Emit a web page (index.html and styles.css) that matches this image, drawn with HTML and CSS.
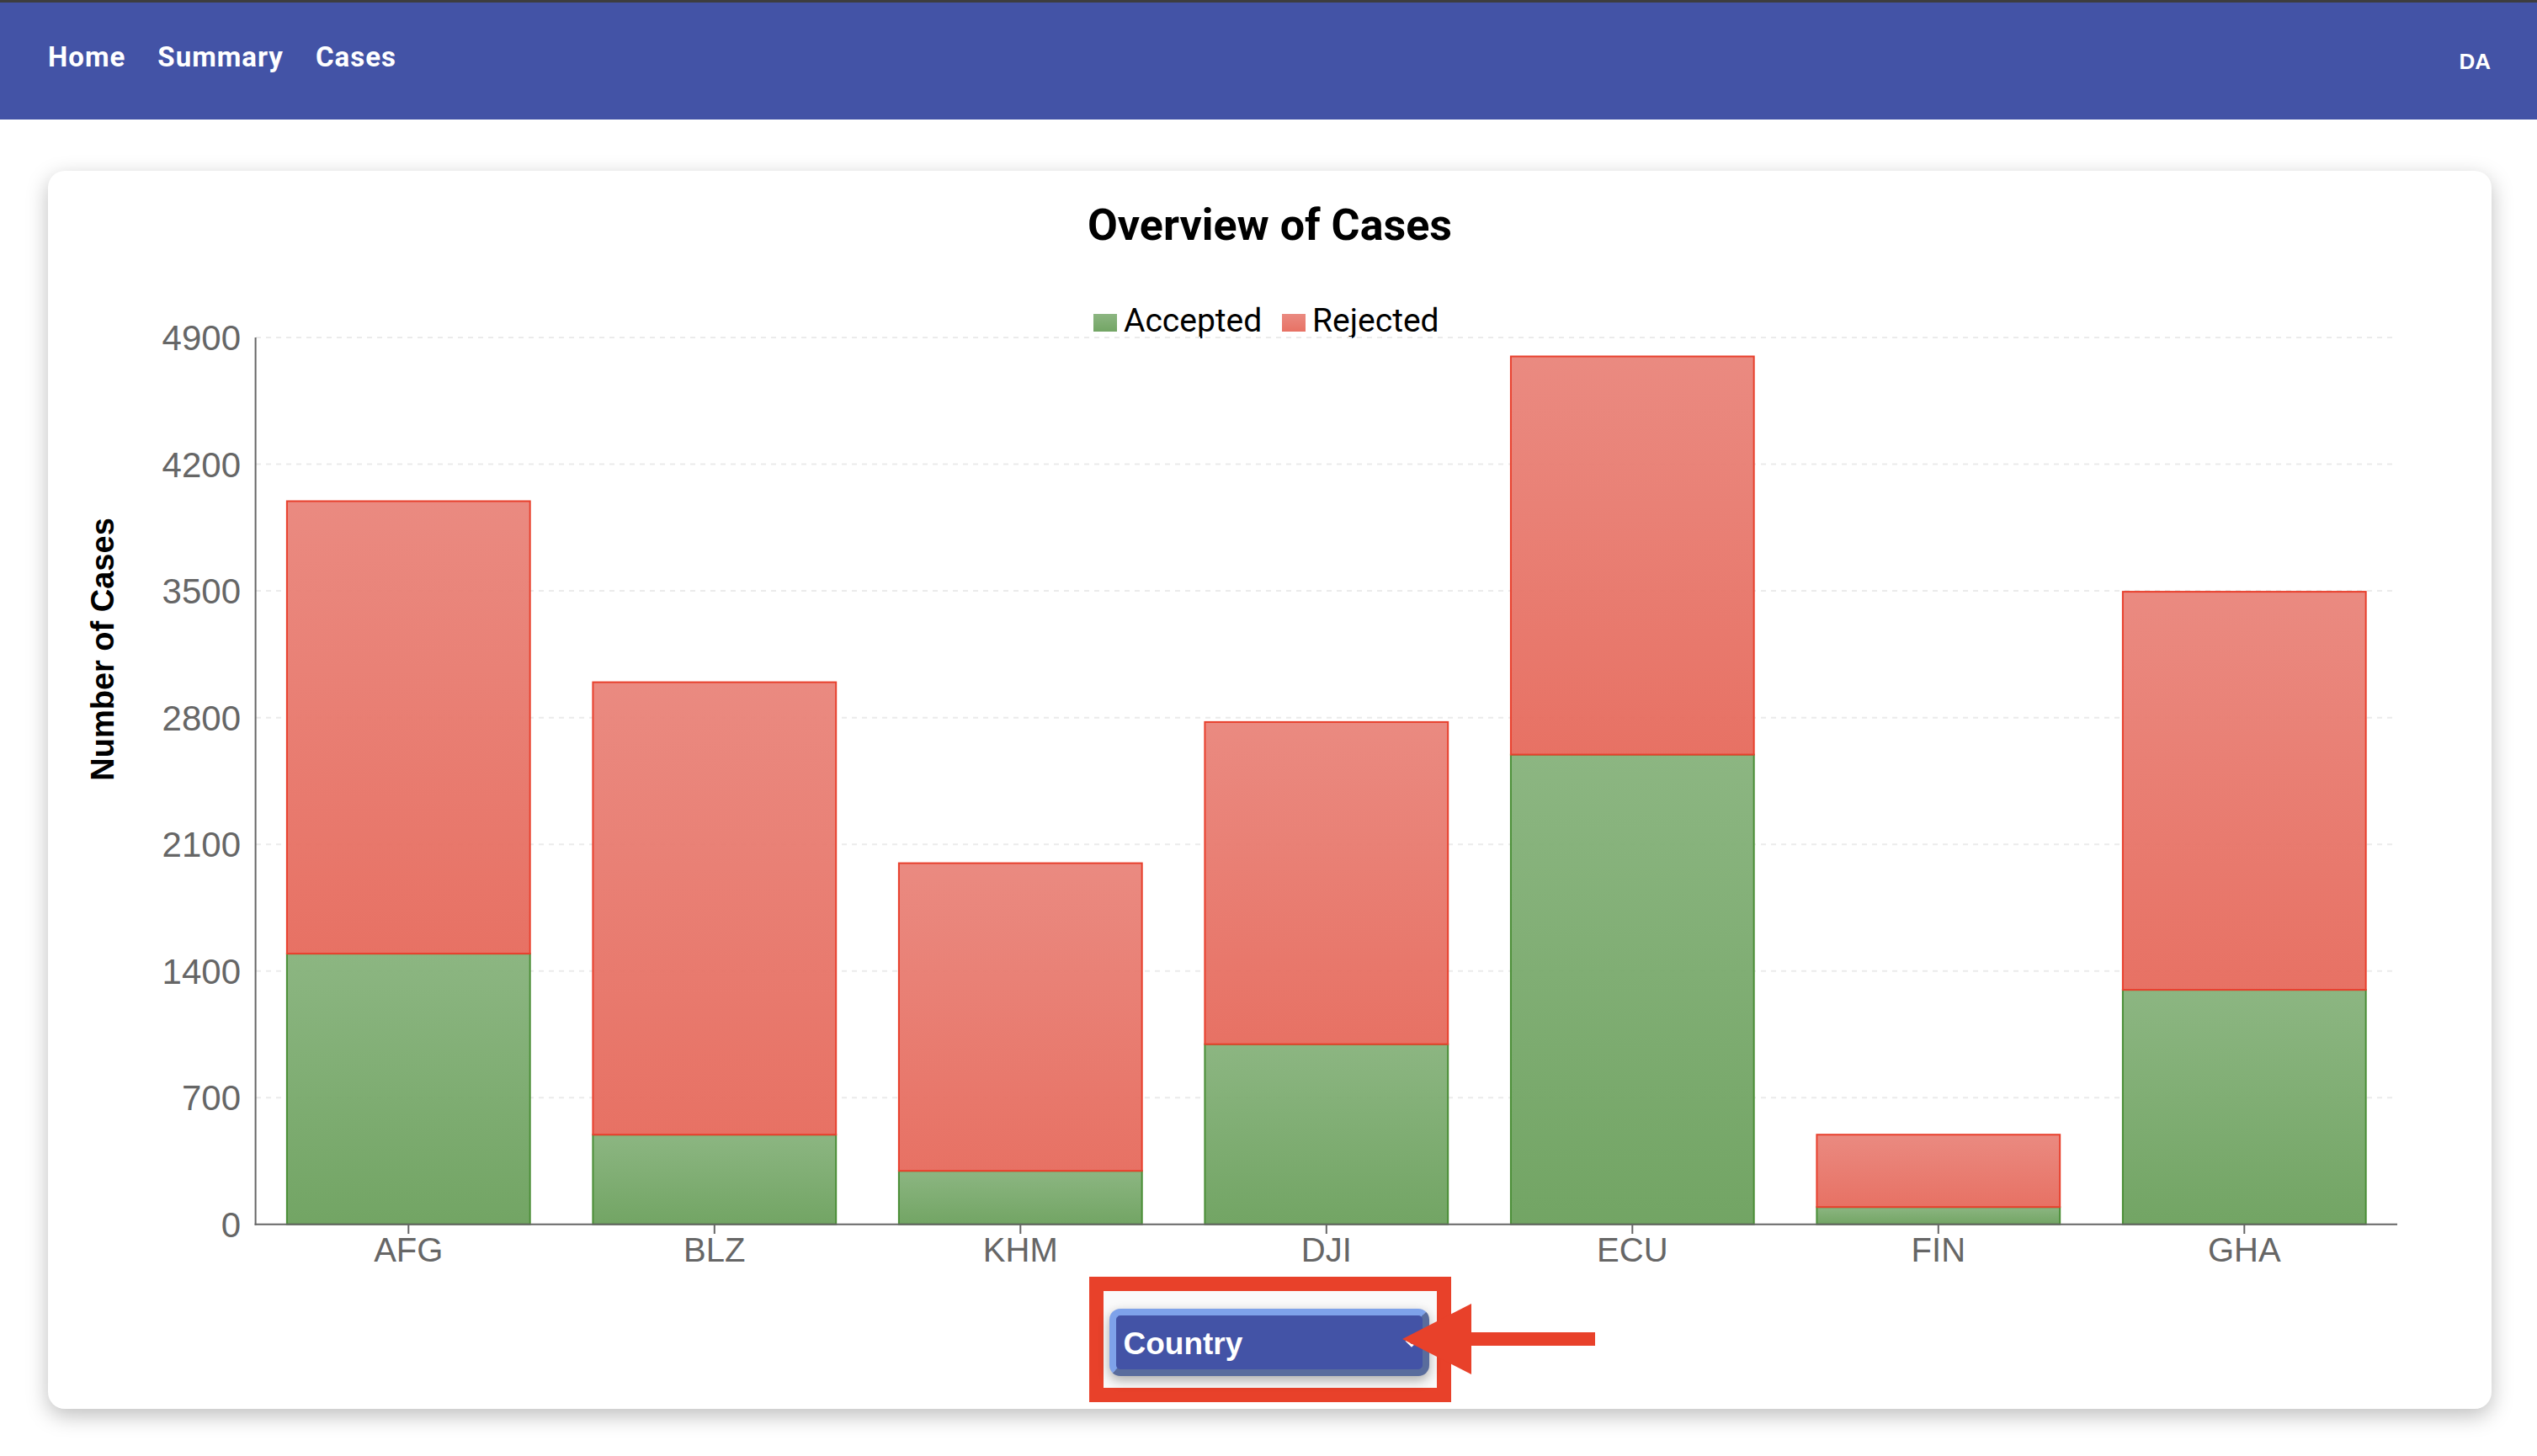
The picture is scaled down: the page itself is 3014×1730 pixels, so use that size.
FILE: index.html
```html
<!DOCTYPE html>
<html lang="en">
<head>
<meta charset="utf-8">
<title>Overview of Cases</title>
<link rel="stylesheet" href="styles.css">
</head>
<body>
<header class="navbar">
  <nav class="nav-links">
    <a class="nav-link" href="#">Home</a>
    <a class="nav-link" href="#">Summary</a>
    <a class="nav-link" href="#">Cases</a>
  </nav>
  <div class="user">DA</div>
</header>

<main class="page">
  <section class="card">
    <h2 class="card-title">Overview of Cases</h2>

    <svg class="chart" width="2903" height="1217" viewBox="57 298 2903 1217" xmlns="http://www.w3.org/2000/svg">
      <defs>
        <linearGradient id="gRed" x1="0" y1="0" x2="0" y2="1">
          <stop offset="0" stop-color="#E9847A" stop-opacity="0.95"/>
          <stop offset="1" stop-color="#E66A5C" stop-opacity="0.95"/>
        </linearGradient>
        <linearGradient id="gGreen" x1="0" y1="0" x2="0" y2="1">
          <stop offset="0" stop-color="#86B27B" stop-opacity="0.95"/>
          <stop offset="1" stop-color="#6BA05C" stop-opacity="0.95"/>
        </linearGradient>
      </defs>

      <!-- legend -->
      <rect x="1299" y="373" width="28" height="21" fill="url(#gGreen)"/>
      <text class="legend" x="1335" y="394">Accepted</text>
      <rect x="1523" y="373" width="28" height="21" fill="url(#gRed)"/>
      <text class="legend" x="1559" y="394">Rejected</text>

      <!-- grid -->
      <g class="grid">
        <line x1="304" y1="401" x2="2848" y2="401"/>
        <line x1="304" y1="551.5" x2="2848" y2="551.5"/>
        <line x1="304" y1="702" x2="2848" y2="702"/>
        <line x1="304" y1="852.7" x2="2848" y2="852.7"/>
        <line x1="304" y1="1003.2" x2="2848" y2="1003.2"/>
        <line x1="304" y1="1153.7" x2="2848" y2="1153.7"/>
        <line x1="304" y1="1304.2" x2="2848" y2="1304.2"/>
      </g>

      <!-- y axis title -->
      <text class="axis-title" transform="translate(135 771.5) rotate(-90)" text-anchor="middle">Number of Cases</text>

      <!-- y ticks -->
      <g class="tick tick-y" text-anchor="end">
        <text x="286" y="416">4900</text>
        <text x="286" y="566.5">4200</text>
        <text x="286" y="717">3500</text>
        <text x="286" y="867.7">2800</text>
        <text x="286" y="1018.2">2100</text>
        <text x="286" y="1168.7">1400</text>
        <text x="286" y="1319.2">700</text>
        <text x="286" y="1469.7">0</text>
      </g>

      <!-- bars: accepted -->
      <g class="bar-green">
        <rect x="340.9" y="1133.1" width="288.8" height="321.6"/>
        <rect x="704.4" y="1348.2" width="288.8" height="106.5"/>
        <rect x="1067.9" y="1391.2" width="288.8" height="63.5"/>
        <rect x="1431.4" y="1240.7" width="288.8" height="214"/>
        <rect x="1794.9" y="896.6" width="288.8" height="558.1"/>
        <rect x="2158.4" y="1434.2" width="288.8" height="20.5"/>
        <rect x="2521.9" y="1176.1" width="288.8" height="278.6"/>
      </g>
      <!-- bars: rejected -->
      <g class="bar-red">
        <rect x="340.9" y="595.5" width="288.8" height="537.6"/>
        <rect x="704.4" y="810.6" width="288.8" height="537.6"/>
        <rect x="1067.9" y="1025.6" width="288.8" height="365.6"/>
        <rect x="1431.4" y="857.9" width="288.8" height="382.8"/>
        <rect x="1794.9" y="423.5" width="288.8" height="473.1"/>
        <rect x="2158.4" y="1348.2" width="288.8" height="86"/>
        <rect x="2521.9" y="703.1" width="288.8" height="473"/>
      </g>

      <!-- axes -->
      <g class="axis">
        <line x1="303.6" y1="401" x2="303.6" y2="1455.7"/>
        <line x1="302.6" y1="1454.7" x2="2848" y2="1454.7"/>
        <line x1="485.3" y1="1454.7" x2="485.3" y2="1466"/>
        <line x1="848.8" y1="1454.7" x2="848.8" y2="1466"/>
        <line x1="1212.3" y1="1454.7" x2="1212.3" y2="1466"/>
        <line x1="1575.8" y1="1454.7" x2="1575.8" y2="1466"/>
        <line x1="1939.3" y1="1454.7" x2="1939.3" y2="1466"/>
        <line x1="2302.8" y1="1454.7" x2="2302.8" y2="1466"/>
        <line x1="2666.3" y1="1454.7" x2="2666.3" y2="1466"/>
      </g>

      <!-- x ticks -->
      <g class="tick" text-anchor="middle">
        <text x="485.3" y="1499">AFG</text>
        <text x="848.8" y="1499">BLZ</text>
        <text x="1212.3" y="1499">KHM</text>
        <text x="1575.8" y="1499">DJI</text>
        <text x="1939.3" y="1499">ECU</text>
        <text x="2302.8" y="1499">FIN</text>
        <text x="2666.3" y="1499">GHA</text>
      </g>
    </svg>

    <div class="highlight">
      <div class="select">
        <span class="select-label">Country</span>
        <svg class="chevron" width="16" height="10" viewBox="0 0 16 10"><path d="M1.5 1.5 L8 8 L14.5 1.5" fill="none" stroke="#fff" stroke-width="2.5"/></svg>
      </div>
    </div>

    <svg class="arrow" width="240" height="95" viewBox="0 0 240 95" xmlns="http://www.w3.org/2000/svg">
      <polygon points="6,46 88,4 88,38 235,38 235,54 88,54 88,88" fill="#E8412A"/>
    </svg>
  </section>
</main>
</body>
</html>
```

FILE: styles.css
```css
html, body {
  margin: 0;
  padding: 0;
  background: #ffffff;
}

body {
  font-family: Roboto, "Liberation Sans", Arial, sans-serif;
}

.navbar {
  height: 139px;
  border-top: 3px solid #3d3d3f;
  background: #4353A6;
  display: flex;
  align-items: center;
  justify-content: space-between;
  padding: 0 55px 0 57px;
}

.nav-links {
  display: flex;
  gap: 38px;
  margin-bottom: 9px;
}

.nav-link {
  color: #ffffff;
  text-decoration: none;
  font-family: Roboto, "Liberation Sans", sans-serif;
  font-weight: 700;
  font-size: 33px;
  letter-spacing: 1px;
  line-height: 40px;
}

.user {
  color: #ffffff;
  font-family: "Liberation Sans", Arial, sans-serif;
  font-weight: 700;
  font-size: 26px;
  line-height: 30px;
}

.page {
  padding: 61px 54px 56px 57px;
}

.card {
  position: relative;
  background: #ffffff;
  border-radius: 20px;
  box-shadow: 0 8px 26px rgba(0, 0, 0, 0.26);
  padding: 35px 0 8px 0;
}

.card-title {
  margin: 0;
  text-align: center;
  font-family: Roboto, "Liberation Sans", sans-serif;
  font-weight: 700;
  font-size: 52px;
  line-height: 60px;
  color: #000000;
}

.chart {
  display: block;
}

.legend {
  font-family: Roboto, "Liberation Sans", sans-serif;
  font-size: 39px;
  fill: #000000;
}

.grid line {
  stroke: #ebebeb;
  stroke-width: 2;
  stroke-dasharray: 6 6;
}

.axis-title {
  font-family: "Liberation Sans", Arial, sans-serif;
  font-weight: 700;
  font-size: 38px;
  fill: #000000;
}

.tick {
  font-family: "Liberation Sans", Arial, sans-serif;
  font-size: 40px;
  fill: #666666;
}

.tick-y {
  font-size: 42px;
}

.bar-green rect {
  fill: url(#gGreen);
  stroke: #4A8E36;
  stroke-width: 2;
}

.bar-red rect {
  fill: url(#gRed);
  stroke: #E8402D;
  stroke-width: 2;
}

.axis line {
  stroke: #666666;
  stroke-width: 2;
}

.highlight {
  width: 430px;
  height: 149px;
  box-sizing: border-box;
  margin: 2px auto 0 auto;
  border: 17px solid #E8412A;
  background: #fafafa;
  padding: 21px 10px 14px 7px;
}

.select {
  box-sizing: border-box;
  width: 380px;
  height: 80px;
  border-radius: 13px;
  border-style: solid;
  border-width: 8px;
  border-color: #7EA2EA #596C9D #596C9D #7EA2EA;
  background: #4353A6;
  box-shadow: 0 5px 14px rgba(0, 0, 0, 0.32);
  display: flex;
  align-items: center;
  justify-content: space-between;
  padding: 0 5px 0 9px;
}

.select-label {
  color: #ffffff;
  font-family: "Liberation Sans", Arial, sans-serif;
  font-weight: 700;
  font-size: 37px;
  line-height: 40px;
  margin-top: 4px;
}

.chevron {
  display: block;
  margin-top: 2px;
}

.arrow {
  position: absolute;
  left: 1603px;
  top: 1342px;
}
```
